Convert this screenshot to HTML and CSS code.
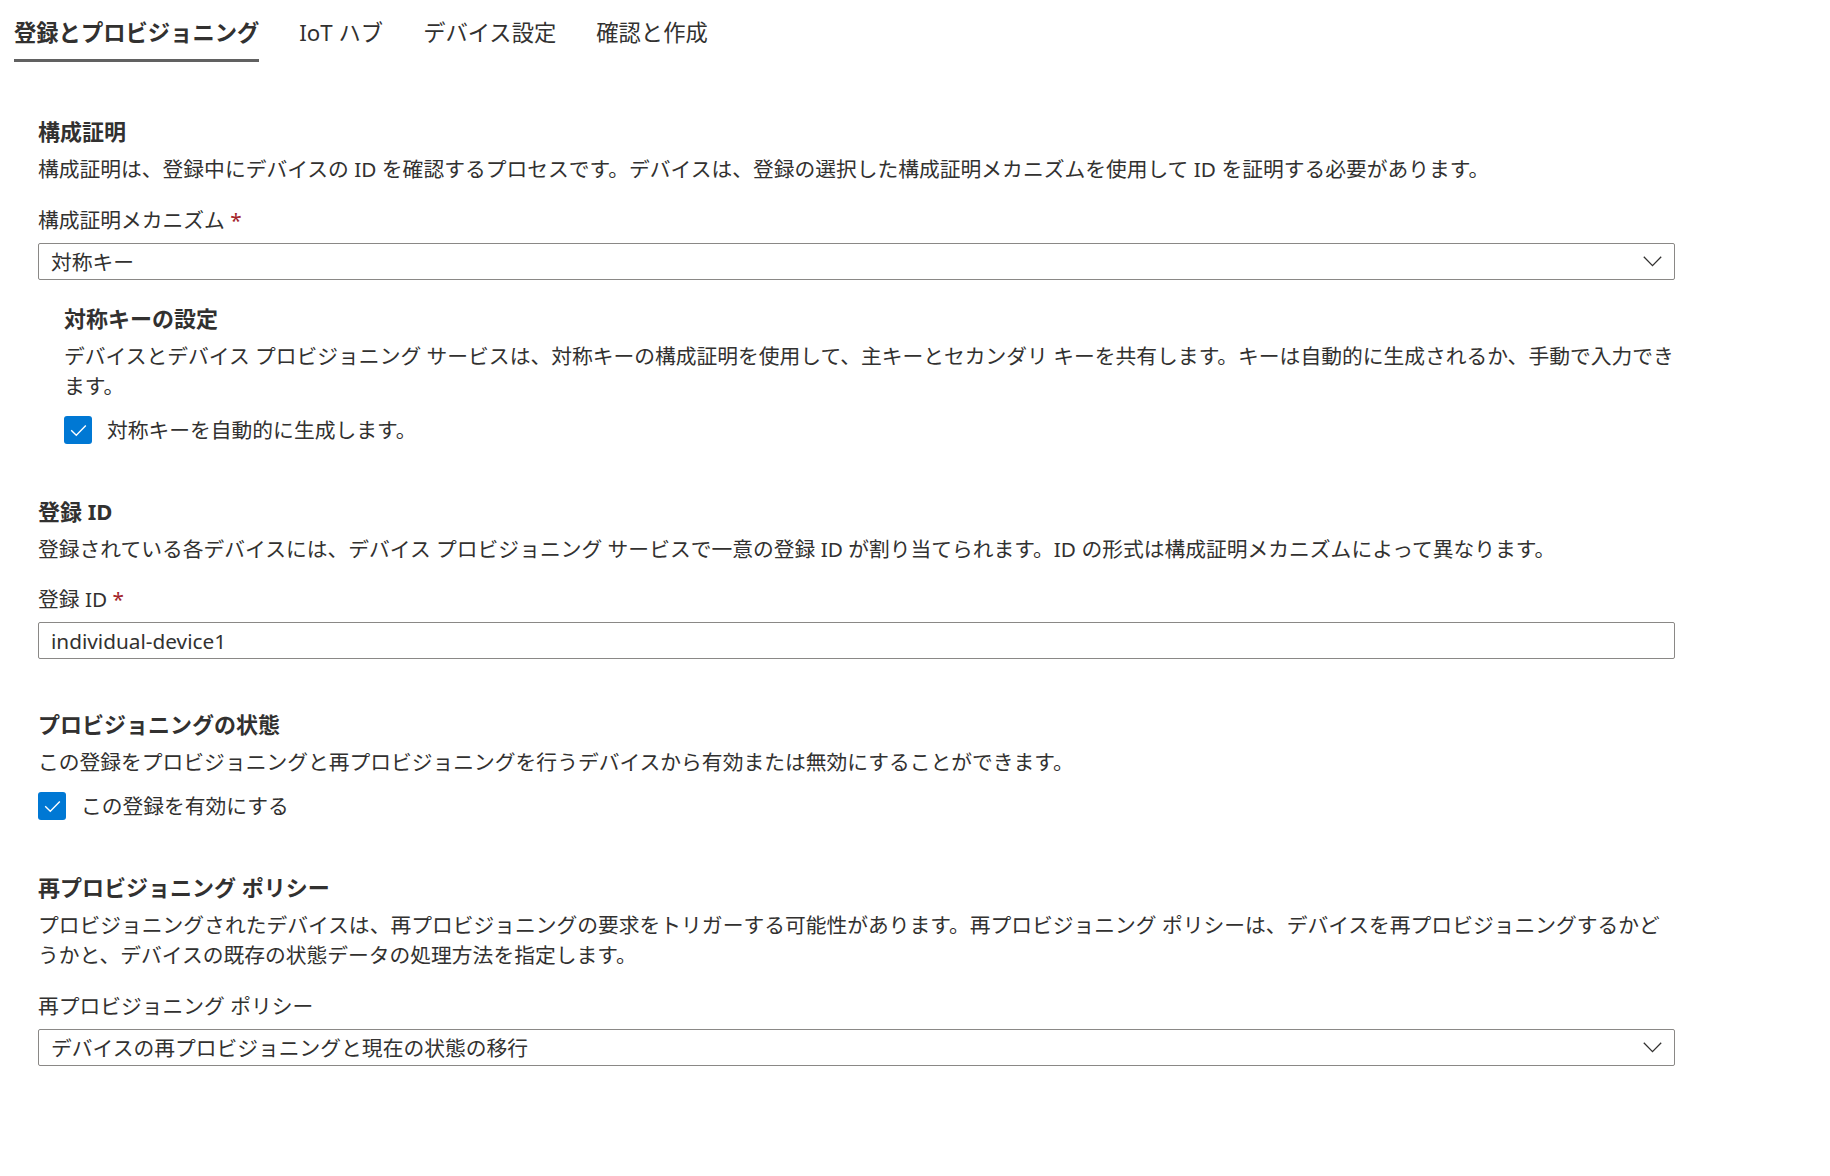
FILE: index.html
```html
<!DOCTYPE html>
<html lang="ja">
<head>
    <meta charset="UTF-8">
    <title>登録の追加 - 登録とプロビジョニング</title>
    <link rel="stylesheet" href="styles.css">
</head>
<body>
    <div class="tabs">
        <div class="tab active">登録とプロビジョニング</div>
        <div class="tab">IoT ハブ</div>
        <div class="tab">デバイス設定</div>
        <div class="tab">確認と作成</div>
    </div>

    <div class="form">
        <!-- 構成証明 -->
        <section class="section first">
            <h2 class="section-title">構成証明</h2>
            <p class="section-desc">構成証明は、登録中にデバイスの ID を確認するプロセスです。デバイスは、登録の選択した構成証明メカニズムを使用して ID を証明する必要があります。</p>
            <div class="field">
                <div class="field-label">構成証明メカニズム <span class="required">*</span></div>
                <div class="dropdown">
                    <span>対称キー</span>
                    <svg class="chevron" width="19" height="11" viewBox="0 0 19 11"><path d="M0.8 0.8 L9.5 9.6 L18.2 0.8" fill="none" stroke="#323130" stroke-width="1.3"/></svg>
                </div>
            </div>

            <div class="subsection">
                <h3 class="section-title">対称キーの設定</h3>
                <p class="section-desc">デバイスとデバイス プロビジョニング サービスは、対称キーの構成証明を使用して、主キーとセカンダリ キーを共有します。キーは自動的に生成されるか、手動で入力できます。</p>
                <label class="checkbox-row">
                    <span class="checkbox"><svg width="28" height="28" viewBox="0 0 28 28"><path d="M7.2 14.2 L12.3 19.2 L21.8 9.6" fill="none" stroke="#ffffff" stroke-width="1.4"/></svg></span>
                    対称キーを自動的に生成します。
                </label>
            </div>
        </section>

        <!-- 登録 ID -->
        <section class="section">
            <h2 class="section-title">登録 ID</h2>
            <p class="section-desc">登録されている各デバイスには、デバイス プロビジョニング サービスで一意の登録 ID が割り当てられます。ID の形式は構成証明メカニズムによって異なります。</p>
            <div class="field">
                <div class="field-label">登録 ID <span class="required">*</span></div>
                <div class="text-input">individual-device1</div>
            </div>
        </section>

        <!-- プロビジョニングの状態 -->
        <section class="section mid">
            <h2 class="section-title">プロビジョニングの状態</h2>
            <p class="section-desc">この登録をプロビジョニングと再プロビジョニングを行うデバイスから有効または無効にすることができます。</p>
            <label class="checkbox-row">
                <span class="checkbox"><svg width="28" height="28" viewBox="0 0 28 28"><path d="M7.2 14.2 L12.3 19.2 L21.8 9.6" fill="none" stroke="#ffffff" stroke-width="1.4"/></svg></span>
                この登録を有効にする
            </label>
        </section>

        <!-- 再プロビジョニング ポリシー -->
        <section class="section">
            <h2 class="section-title">再プロビジョニング ポリシー</h2>
            <p class="section-desc">プロビジョニングされたデバイスは、再プロビジョニングの要求をトリガーする可能性があります。再プロビジョニング ポリシーは、デバイスを再プロビジョニングするかどうかと、デバイスの既存の状態データの処理方法を指定します。</p>
            <div class="field">
                <div class="field-label">再プロビジョニング ポリシー</div>
                <div class="dropdown">
                    <span>デバイスの再プロビジョニングと現在の状態の移行</span>
                    <svg class="chevron" width="19" height="11" viewBox="0 0 19 11"><path d="M0.8 0.8 L9.5 9.6 L18.2 0.8" fill="none" stroke="#323130" stroke-width="1.3"/></svg>
                </div>
            </div>
        </section>
    </div>
</body>
</html>
```

FILE: styles.css
```css
* { margin: 0; padding: 0; box-sizing: border-box; }

body {
    font-family: "Noto Sans", "Noto Sans CJK JP", sans-serif;
    font-size: 20.78px;
    color: #323130;
    background: #ffffff;
}

/* タブ */
.tabs {
    display: flex;
    gap: 40px;
    padding-left: 14px;
}

.tab {
    font-size: 22.3px;
    line-height: 30px;
    padding-top: 18px;
    padding-bottom: 11px;
    border-bottom: 3px solid transparent;
    color: #323130;
    white-space: nowrap;
}

.tab.active {
    font-weight: 700;
    border-bottom-color: #616161;
}

/* フォーム */
.form {
    margin-left: 38px;
    width: 1637px;
}

.section {
    margin-top: 51px;
}

.section.first {
    margin-top: 54px;
}

.section.mid {
    margin-top: 50px;
}

.section-title {
    font-size: 22px;
    font-weight: 700;
    line-height: 30px;
    margin-bottom: 8px;
}

.section-desc {
    line-height: 30.5px;
}

.field {
    margin-top: 20px;
}

.field-label {
    line-height: 30px;
    margin-bottom: 8px;
}

.required {
    color: #a4262c;
}

.dropdown,
.text-input {
    height: 37px;
    border: 1px solid #8a8886;
    border-radius: 2px;
    padding: 0 12px;
    display: flex;
    align-items: center;
    background: #ffffff;
}

.dropdown {
    justify-content: space-between;
}

.chevron {
    flex-shrink: 0;
}

.subsection {
    margin-top: 23px;
    padding-left: 26px;
}

.checkbox-row {
    display: flex;
    align-items: center;
    gap: 15px;
    margin-top: 13px;
    line-height: 30px;
}

.checkbox {
    width: 28px;
    height: 28px;
    border-radius: 3px;
    background: #0078d4;
    display: flex;
    flex-shrink: 0;
}
```
